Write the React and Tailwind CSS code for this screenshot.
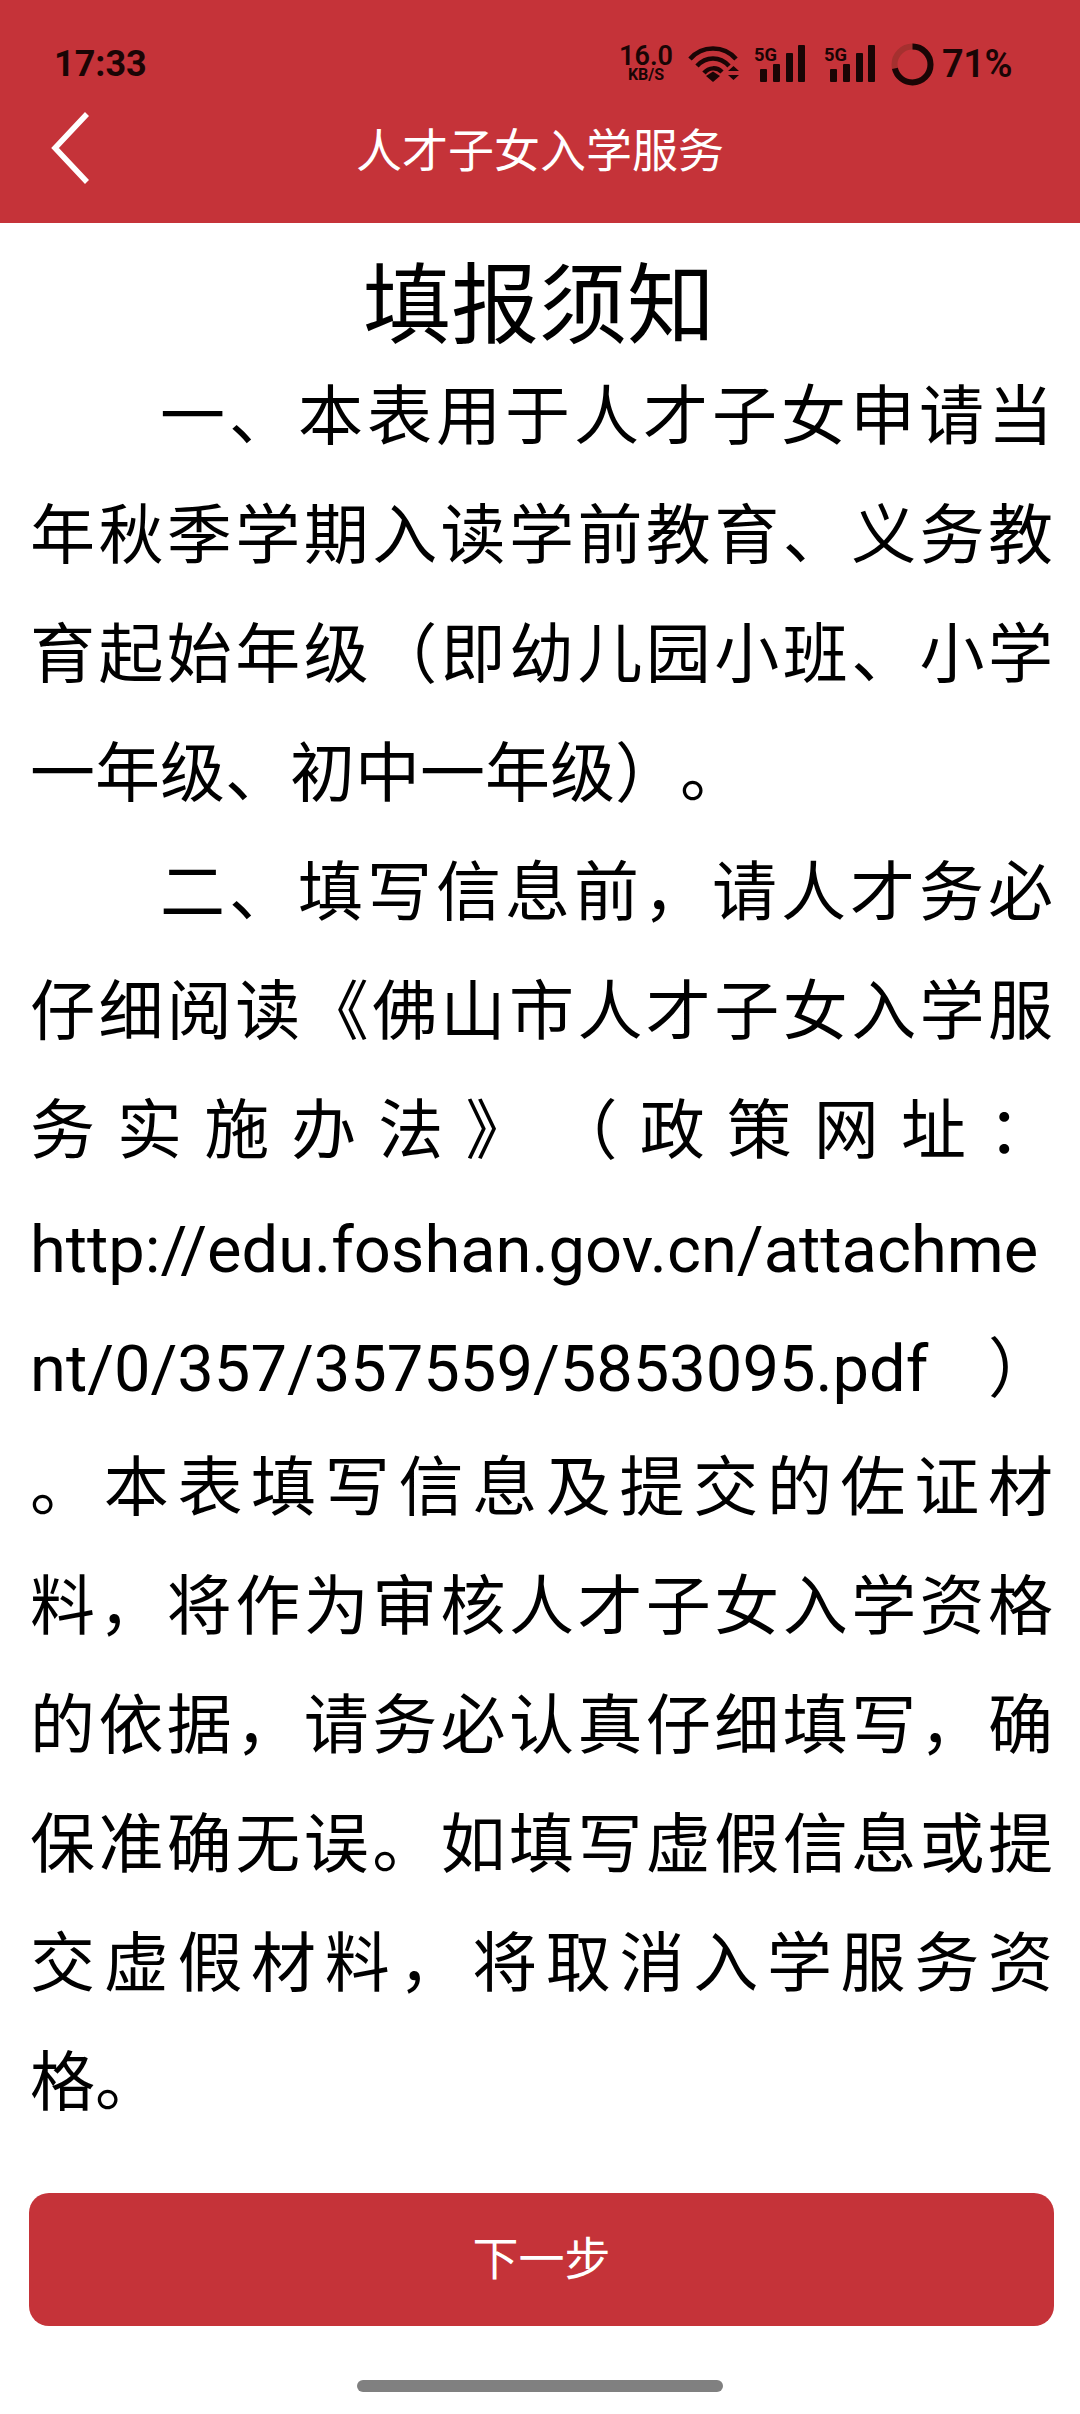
const LINES = [
  { t: "一、本表用于人才子女申请当", indent: true, justify: true },
  { t: "年秋季学期入读学前教育、义务教", justify: true },
  { t: "育起始年级（即幼儿园小班、小学", justify: true },
  { t: "一年级、初中一年级）。" },
  { t: "二、填写信息前，请人才务必", indent: true, justify: true },
  { t: "仔细阅读《佛山市人才子女入学服", justify: true },
  { t: "务实施办法》（政策网址：", justify: true },
  { t: "http://edu.foshan.gov.cn/attachme" },
  { t: "nt/0/357/357559/5853095.pdf ）", justify: true },
  { t: "。本表填写信息及提交的佐证材", justify: true },
  { t: "料，将作为审核人才子女入学资格", justify: true },
  { t: "的依据，请务必认真仔细填写，确", justify: true },
  { t: "保准确无误。如填写虚假信息或提", justify: true },
  { t: "交虚假材料，将取消入学服务资", justify: true },
  { t: "格。" },
];

function Signal() {
  return (
    <svg width="52" height="38" viewBox="0 0 52 38" className="shrink-0 overflow-visible">
      <text x="0" y="16" fontSize="18" fontWeight="700" fill="#1a0505" fontFamily="Roboto, sans-serif" textLength="23" lengthAdjust="spacingAndGlyphs">5G</text>
      <rect x="6" y="24" width="7" height="13" rx="1" fill="#1a0505" />
      <rect x="19" y="19" width="7" height="18" rx="1" fill="#1a0505" />
      <rect x="32" y="8" width="7" height="29" rx="1" fill="#1a0505" />
      <rect x="44" y="0" width="7" height="37" rx="1" fill="#1a0505" />
    </svg>
  );
}

function Wifi() {
  return (
    <svg width="52" height="38" viewBox="0 0 52 38" className="shrink-0">
      <g fill="none" stroke="#1a0505" strokeWidth="4.500">
        <path d="M2 14 C14 0 36 0 48 14" />
        <path d="M9 21 C18 11 32 11 41 21" />
        <path d="M16 28 C21 22 29 22 34 27" />
      </g>
      <path d="M18 31 L25 26.500 L32 31 L25 37 Z" fill="#1a0505" />
      <path d="M40 26 L45.500 21 L51 26 Z M40 30 L51 30 L45.500 35 Z" fill="#1a0505" />
    </svg>
  );
}

function BatteryRing() {
  const c = 2 * Math.PI * 18;
  return (
    <svg width="43" height="43" viewBox="0 0 43 43" className="shrink-0">
      <circle cx="21.500" cy="21.500" r="18" fill="none" stroke="#a5302f" strokeWidth="6" />
      <circle
        cx="21.500"
        cy="21.500"
        r="18"
        fill="none"
        stroke="#1a0505"
        strokeWidth="6"
        strokeDasharray={`${c * 0.71} ${c}`}
        transform="rotate(-90 21.500 21.500)"
      />
    </svg>
  );
}

export default function App() {
  return (
    <div className="w-[1080px] h-[2414px] flex flex-col bg-white overflow-hidden font-['Roboto','Noto_Sans_CJK_SC',sans-serif] [text-spacing-trim:space-all]">
      <header className="h-[223px] shrink-0 bg-[#c53339] flex flex-col">
        <div className="h-[46px] mt-[41px] pl-[54px] pr-[68px] flex items-center justify-between text-[#1a0505]">
          <span className="text-[36px] leading-none font-bold">17:33</span>
          <div className="flex items-center">
            <div className="flex flex-col items-center w-[58px] mr-[13px] leading-none">
              <span className="text-[27px] leading-[21px] font-semibold">16.0</span>
              <span className="text-[16px] leading-[15px] font-bold">KB/S</span>
            </div>
            <Wifi />
            <div className="w-[14px]" />
            <Signal />
            <div className="w-[18px]" />
            <Signal />
            <div className="w-[15px]" />
            <BatteryRing />
            <span className="ml-[8px] text-[38px] leading-none font-semibold tracking-[-0.5px]">71%</span>
          </div>
        </div>
        <nav className="relative flex-1 pb-[8px] flex items-center justify-center">
          <svg width="40" height="74" viewBox="0 0 40 74" className="absolute left-[50px] top-[24px]">
            <path d="M37 3 L5 37 L37 71" fill="none" stroke="#ffffff" strokeWidth="5.500" />
          </svg>
          <span className="text-[46px] leading-none text-white font-normal">人才子女入学服务</span>
        </nav>
      </header>

      <main className="flex-1 flex flex-col pl-[30px] pr-[27px]">
        <h1 className="text-center text-[88px] leading-[98px] mt-[34px] mb-[3px] pr-[5px] font-normal text-black">填报须知</h1>
        <div className="text-[65px] leading-[119px] text-black">
          {LINES.map((line, i) => (
            <div
              key={i}
              className={`whitespace-pre ${line.justify ? "text-justify [text-align-last:justify] whitespace-normal" : "text-left"} ${line.indent ? "indent-[130px]" : ""}`}
            >
              {line.t}
            </div>
          ))}
        </div>
      </main>

      <div className="shrink-0 h-[221px] pl-[29px] pr-[26px] flex flex-col">
        <button className="h-[133px] w-full rounded-[20px] bg-[#c53339] text-white text-[46px] font-normal">下一步</button>
        <div className="mt-[54px] ml-[328px] w-[366px] h-[12px] rounded-full bg-[#808080]" />
      </div>
    </div>
  );
}
